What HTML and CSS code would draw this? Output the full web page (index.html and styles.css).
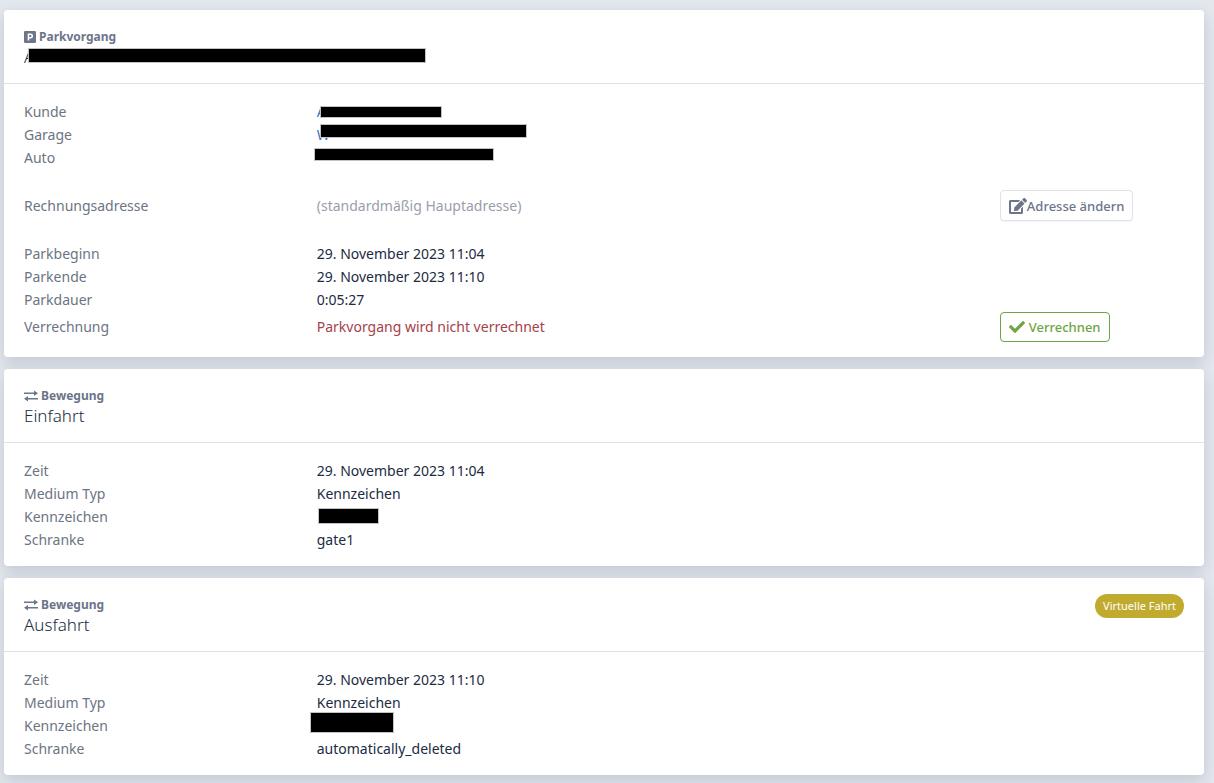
FILE: index.html
```html
<!DOCTYPE html>
<html lang="de">
<head>
    <meta charset="UTF-8">
    <meta name="viewport" content="width=device-width, initial-scale=1.0">
    <title>Parkvorgang</title>
    <link rel="stylesheet" href="styles.css">
</head>
<body>
    <main class="page">
        <section class="card">
            <header class="card-head">
                <div>
                    <div class="kicker">
                        <svg class="icon-park" viewBox="0 0 12 12" aria-hidden="true"><path fill="currentColor" fill-rule="evenodd" d="M1.3 0h9.4A1.3 1.3 0 0 1 12 1.3v9.4a1.3 1.3 0 0 1-1.3 1.3H1.3A1.3 1.3 0 0 1 0 10.7V1.3A1.3 1.3 0 0 1 1.3 0zM3.7 2.5v7h1.5v-2h1.3a2.5 2.5 0 0 0 0-5zM5.2 3.9h1.2a1.1 1.1 0 0 1 0 2.2H5.2z"/></svg>
                        Parkvorgang
                    </div>
                    <h2>A<span class="redacted redacted-title"></span></h2>
                </div>
            </header>
            <div class="card-body">
                <dl class="group">
                    <div class="row"><dt>Kunde</dt><dd><a href="#">A<span class="redacted redacted-customer"></span></a></dd></div>
                    <div class="row"><dt>Garage</dt><dd><a href="#">W<span class="redacted redacted-garage"></span></a></dd></div>
                    <div class="row"><dt>Auto</dt><dd><a href="#" aria-label="Auto"><span class="redacted redacted-car"></span></a></dd></div>
                </dl>
                <dl class="group">
                    <div class="row row-action">
                        <dt>Rechnungsadresse</dt>
                        <dd class="muted">(standardmäßig Hauptadresse)</dd>
                        <dd>
                            <button type="button" class="button">
                                <svg class="icon-edit" viewBox="0 0 576 512" aria-hidden="true"><path fill="currentColor" d="M402.600 83.200l90.200 90.200c3.800 3.800 3.800 10 0 13.800L274.400 405.600l-92.800 10.300c-12.400 1.400-22.900-9.100-21.500-21.500l10.300-92.800L388.800 83.200c3.800-3.800 10-3.800 13.800 0zm162-22.900l-48.800-48.800c-15.200-15.200-39.900-15.200-55.200 0l-35.400 35.400c-3.800 3.800-3.800 10 0 13.800l90.200 90.200c3.800 3.800 10 3.800 13.800 0l35.400-35.400c15.200-15.300 15.200-40 0-55.200zM384 346.200V448H64V128h229.800c3.200 0 6.200-1.300 8.500-3.500l40-40c7.600-7.600 2.200-20.500-8.500-20.500H48C21.500 64 0 85.500 0 112v352c0 26.500 21.500 48 48 48h352c26.500 0 48-21.500 48-48V306.200c0-10.700-12.900-16-20.500-8.500l-40 40c-2.200 2.300-3.500 5.300-3.500 8.500z"/></svg>
                                Adresse ändern
                            </button>
                        </dd>
                    </div>
                </dl>
                <dl class="group">
                    <div class="row"><dt>Parkbeginn</dt><dd>29. November 2023 11:04</dd></div>
                    <div class="row"><dt>Parkende</dt><dd>29. November 2023 11:10</dd></div>
                    <div class="row"><dt>Parkdauer</dt><dd>0:05:27</dd></div>
                    <div class="row row-action">
                        <dt>Verrechnung</dt>
                        <dd class="danger">Parkvorgang wird nicht verrechnet</dd>
                        <dd>
                            <button type="button" class="button button-success">
                                <svg class="icon-check" viewBox="0 0 512 512" aria-hidden="true"><path fill="currentColor" d="M173.900 439.400l-166.400-166.400c-10-10-10-26.200 0-36.200l36.200-36.200c10-10 26.200-10 36.200 0L192 312.700 432.100 72.600c10-10 26.200-10 36.200 0l36.200 36.200c10 10 10 26.200 0 36.200l-294.400 294.400c-10 10-26.200 10-36.200 0z"/></svg>
                                Verrechnen
                            </button>
                        </dd>
                    </div>
                </dl>
            </div>
        </section>

        <section class="card">
            <header class="card-head">
                <div>
                    <div class="kicker">
                        <svg class="icon-move" viewBox="0 0 14 12" aria-hidden="true"><path fill="currentColor" d="M0 2.500h10V.5L14 3.300 10 6V4H0zM14 8H4V6L0 8.800l4 2.700v-2h10z"/></svg>
                        Bewegung
                    </div>
                    <h2>Einfahrt</h2>
                </div>
            </header>
            <div class="card-body">
                <dl class="group">
                    <div class="row"><dt>Zeit</dt><dd>29. November 2023 11:04</dd></div>
                    <div class="row"><dt>Medium Typ</dt><dd>Kennzeichen</dd></div>
                    <div class="row"><dt>Kennzeichen</dt><dd><span class="redacted redacted-plate"></span></dd></div>
                    <div class="row"><dt>Schranke</dt><dd>gate1</dd></div>
                </dl>
            </div>
        </section>

        <section class="card">
            <header class="card-head">
                <div>
                    <div class="kicker">
                        <svg class="icon-move" viewBox="0 0 14 12" aria-hidden="true"><path fill="currentColor" d="M0 2.500h10V.5L14 3.300 10 6V4H0zM14 8H4V6L0 8.800l4 2.700v-2h10z"/></svg>
                        Bewegung
                    </div>
                    <h2>Ausfahrt</h2>
                </div>
                <span class="badge">Virtuelle Fahrt</span>
            </header>
            <div class="card-body">
                <dl class="group">
                    <div class="row"><dt>Zeit</dt><dd>29. November 2023 11:10</dd></div>
                    <div class="row"><dt>Medium Typ</dt><dd>Kennzeichen</dd></div>
                    <div class="row"><dt>Kennzeichen</dt><dd><span class="redacted redacted-plate-large"></span></dd></div>
                    <div class="row"><dt>Schranke</dt><dd>automatically_deleted</dd></div>
                </dl>
            </div>
        </section>
    </main>
</body>
</html>
```
FILE: styles.css
```css
* {
    box-sizing: border-box;
}
body {
    margin: 0;
    background-color: #e3e7ee;
    color: #212b3f;
    font-family: "Segoe UI", "Noto Sans", sans-serif;
    font-size: 14px;
    line-height: 23px;
}
.page {
    display: flex;
    flex-direction: column;
    gap: 12px;
    padding: 10px 10px 8px 4px;
}
.card {
    background-color: #fff;
    border-radius: 4px;
    box-shadow: 0 6px 15px rgba(33, 43, 63, 0.16);
}
.card-head {
    display: flex;
    justify-content: space-between;
    align-items: flex-start;
    min-height: 74px;
    padding: 16px 20px;
    border-bottom: 1px solid #dfe1e6;
}
.kicker {
    display: flex;
    align-items: center;
    gap: 3px;
    color: #6c7589;
    font-size: 12px;
    font-weight: 700;
    line-height: 21px;
}
h2 {
    position: relative;
    margin: 0;
    font-size: 17px;
    font-weight: 300;
    line-height: 20px;
}
.card-body {
    display: flex;
    flex-direction: column;
    gap: 21px;
    padding: 16px 9px 15px 20px;
}
.group {
    margin: 0;
}
.row {
    display: grid;
    grid-template-columns: 3fr 7fr 2fr;
    align-items: center;
    min-height: 23px;
}
.row-action {
    min-height: 31px;
}
dt {
    color: #6c7483;
}
dd {
    position: relative;
    min-height: 23px;
    margin: 0;
}
a {
    color: #3a72c4;
    text-decoration: none;
}
.muted {
    color: #999eac;
}
.danger {
    color: #a5414b;
}
.button {
    display: flex;
    align-items: center;
    height: 31px;
    padding: 0 8px;
    border: 1px solid #dfe2ea;
    border-radius: 4px;
    background-color: #fff;
    box-shadow: 0 1px 1px rgba(33, 43, 63, 0.06);
    color: #6c7589;
    font: 500 13px "Segoe UI", "Noto Sans", sans-serif;
    cursor: pointer;
}
.button-success {
    gap: 4px;
    height: 30px;
    border-color: #6fa544;
    box-shadow: none;
    color: #6fa544;
}
.badge {
    padding: 0 8px;
    border-radius: 12px;
    background-color: #c1ab2f;
    color: #fff;
    font-size: 11px;
    line-height: 24px;
}
.icon-park {
    width: 12px;
    height: 12px;
}
.icon-move {
    width: 14px;
    height: 12px;
}
.icon-edit {
    width: 18px;
    height: 16px;
}
.icon-check {
    width: 16px;
    height: 16px;
}

/* blacked-out values */
.redacted {
    position: absolute;
    top: 6px;
    left: 3px;
    height: 12px;
    border: 1px solid #c3c3c3;
    background-color: #000;
}
.redacted-title {
    top: 1px;
    left: 4px;
    width: 398px;
    height: 15px;
}
.redacted-customer {
    width: 122px;
}
.redacted-garage {
    top: 1px;
    width: 207px;
    height: 14px;
}
.redacted-car {
    top: 2px;
    left: -3px;
    width: 180px;
    height: 13px;
}
.redacted-plate {
    top: 3px;
    left: 1px;
    width: 61px;
    height: 16px;
}
.redacted-plate-large {
    top: -2px;
    left: -7px;
    width: 84px;
    height: 21px;
}
```
